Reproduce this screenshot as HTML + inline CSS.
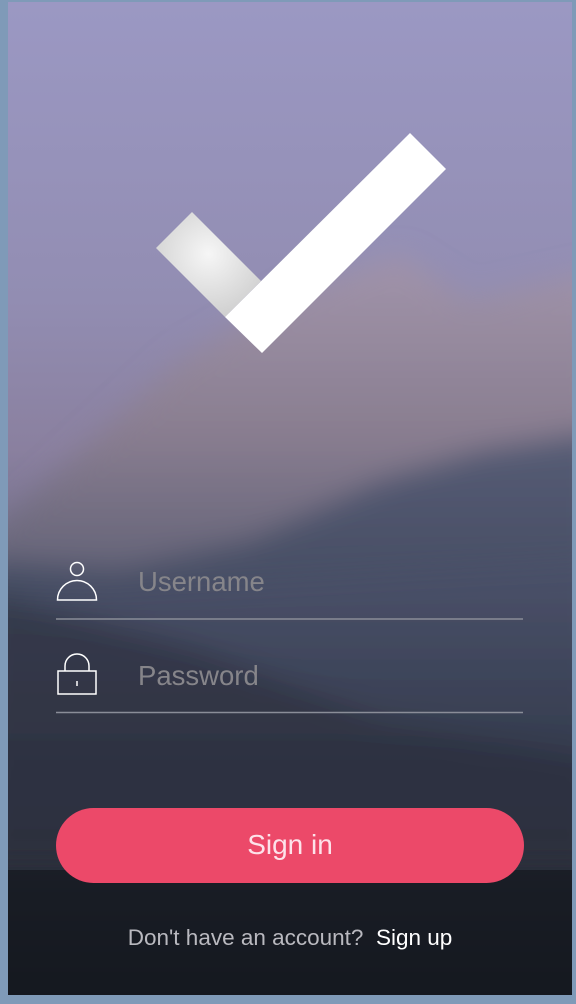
<!DOCTYPE html>
<html><head><meta charset="utf-8"><style>
html,body{margin:0;padding:0;width:576px;height:1004px;overflow:hidden;background:#6b7d95;font-family:"Liberation Sans",Arial,sans-serif}
.wrap{position:absolute;left:0;top:0;width:576px;height:1004px}
.t{position:absolute;font-family:"Liberation Sans",Arial,sans-serif}
</style></head><body>
<div class="wrap">
<svg width="576" height="1004" style="position:absolute;left:0;top:0">
<defs>
<linearGradient id="sky" x1="0" y1="0" x2="0" y2="1">
<stop offset="0" stop-color="#9b98c3"/><stop offset="0.3" stop-color="#928db2"/><stop offset="0.45" stop-color="#8a809f"/><stop offset="0.6" stop-color="#6c6a85"/><stop offset="0.75" stop-color="#3d4358"/><stop offset="0.86" stop-color="#2a2e3a"/><stop offset="1" stop-color="#0f1318"/>
</linearGradient>
<linearGradient id="mt" x1="0" y1="0" x2="0" y2="1">
<stop offset="0" stop-color="#a495a9"/><stop offset="0.5" stop-color="#8a7e8e"/><stop offset="1" stop-color="#5a5c70"/>
</linearGradient>
<linearGradient id="lm" x1="0" y1="0" x2="0" y2="1">
<stop offset="0" stop-color="#4a5570"/><stop offset="1" stop-color="#2c3140"/>
</linearGradient>
<radialGradient id="lb" cx="0.5" cy="0.4" r="0.7">
<stop offset="0" stop-color="#f6f6f6"/><stop offset="1" stop-color="#cacaca"/>
</radialGradient>
<filter id="bl" x="-0.2" y="-0.2" width="1.4" height="1.4"><feGaussianBlur stdDeviation="14"/></filter>
<clipPath id="cp"><rect x="8" y="2" width="564" height="993"/></clipPath>
</defs>
<rect x="0" y="0" width="576" height="1004" fill="#7f9ab8"/>
<rect x="8" y="2" width="564" height="993" fill="url(#sky)"/>
<g clip-path="url(#cp)">
<g filter="url(#bl)">
<path d="M-20 540 L60 470 L180 360 L300 290 L400 255 L470 300 L600 270 L600 560 L-20 600 Z" fill="url(#mt)" opacity="0.85"/>
<path d="M-20 560 L120 570 L250 540 L380 480 L480 450 L600 430 L600 870 L-20 870 Z" fill="url(#lm)" opacity="0.8"/>
<path d="M-20 590 L200 650 L380 720 L600 760 L600 870 L-20 870 Z" fill="#2c2f3c" opacity="0.6"/>
</g>
<rect x="8" y="870" width="564" height="125" fill="#161a22" opacity="0.8"/>
</g>
<polygon points="156,248 192,212 261,281 225,317" fill="url(#lb)"/>
<polygon points="225,317 262,353 446,169 410,133" fill="#fff"/>
<circle cx="77" cy="569" r="6.5" fill="none" stroke="#fff" stroke-width="1.5"/>
<path d="M57.5 600 A19.5 19.5 0 0 1 96.5 600 Z" fill="none" stroke="#fff" stroke-width="1.5"/>
<path d="M65 671 V666 A12 12 0 0 1 89 666 V671" fill="none" stroke="#fff" stroke-width="1.5"/>
<rect x="58" y="671" width="38" height="23" fill="none" stroke="#fff" stroke-width="1.5"/>
<line x1="77" y1="681" x2="77" y2="686" stroke="#fff" stroke-width="1.5"/>
<line x1="56" y1="619" x2="523" y2="619" stroke="#8a8d98" stroke-width="1.5"/>
<line x1="56" y1="712.5" x2="523" y2="712.5" stroke="#8a8d98" stroke-width="1.5"/>
<rect x="56" y="808" width="468" height="75" rx="37.5" fill="#ec4969"/>
</svg>
<div class="t" style="left:138px;top:566px;font-size:27.5px;color:#86858a">Username</div>
<div class="t" style="left:138px;top:660px;font-size:27.5px;color:#86858a">Password</div>
<div class="t" style="left:56px;top:829px;width:468px;text-align:center;font-size:28px;color:#fde2ea">Sign in</div>
<div class="t" style="left:0;top:925px;width:580px;text-align:center;font-size:22.5px;color:#b9b9bf">Don't have an account?&nbsp; <span style="color:#fff">Sign up</span></div>
</div>
</body></html>
